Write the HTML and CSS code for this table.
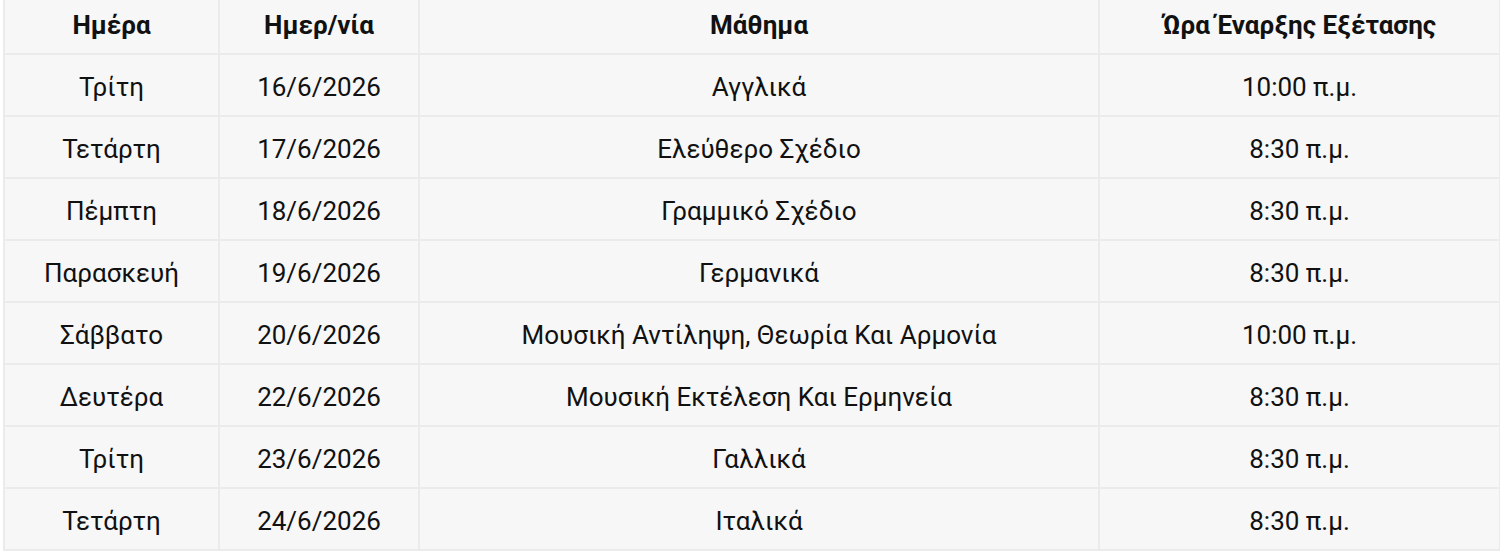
FILE: index.html
```
<!DOCTYPE html>
<html lang="el">
<head>
<meta charset="utf-8">
<link rel="stylesheet" href="styles.css">
</head>
<body>
<table class="exams">
  <colgroup>
    <col class="c-day"><col class="c-date"><col class="c-subj"><col class="c-time">
  </colgroup>
  <thead>
    <tr><th>Ημέρα</th><th>Ημερ/νία</th><th>Μάθημα</th><th>Ώρα Έναρξης Εξέτασης</th></tr>
  </thead>
  <tbody>
    <tr><td>Τρίτη</td><td>16/6/2026</td><td>Αγγλικά</td><td>10:00 π.μ.</td></tr>
    <tr><td>Τετάρτη</td><td>17/6/2026</td><td>Ελεύθερο Σχέδιο</td><td>8:30 π.μ.</td></tr>
    <tr><td>Πέμπτη</td><td>18/6/2026</td><td>Γραμμικό Σχέδιο</td><td>8:30 π.μ.</td></tr>
    <tr><td>Παρασκευή</td><td>19/6/2026</td><td>Γερμανικά</td><td>8:30 π.μ.</td></tr>
    <tr><td>Σάββατο</td><td>20/6/2026</td><td>Μουσική Αντίληψη, Θεωρία Και Αρμονία</td><td>10:00 π.μ.</td></tr>
    <tr><td>Δευτέρα</td><td>22/6/2026</td><td>Μουσική Εκτέλεση Και Ερμηνεία</td><td>8:30 π.μ.</td></tr>
    <tr><td>Τρίτη</td><td>23/6/2026</td><td>Γαλλικά</td><td>8:30 π.μ.</td></tr>
    <tr><td>Τετάρτη</td><td>24/6/2026</td><td>Ιταλικά</td><td>8:30 π.μ.</td></tr>
  </tbody>
</table>
</body>
</html>
```

FILE: styles.css
```
html, body {
  margin: 0;
  padding: 0;
  background: #ffffff;
}
body {
  padding-left: 3px;
  font-family: Roboto, "Noto Sans", sans-serif;
  color: #111111;
}
.exams {
  border-collapse: collapse;
  width: 1496px;
  table-layout: fixed;
  background: #f7f7f7;
}
.c-day { width: 215px; }
.c-date { width: 200px; }
.c-subj { width: 680px; }
.c-time { width: 401px; }
.exams th,
.exams td {
  border: 2px solid #ebebeb;
  text-align: center;
  padding: 0;
}
.exams thead tr:first-child th { border-top: none; }
.exams th {
  height: 50px;
  padding-bottom: 3px;
  font-weight: 700;
  font-size: 26px;
}
.exams td {
  height: 57px;
  padding-top: 3px;
  font-size: 26px;
  font-weight: 400;
}
```
